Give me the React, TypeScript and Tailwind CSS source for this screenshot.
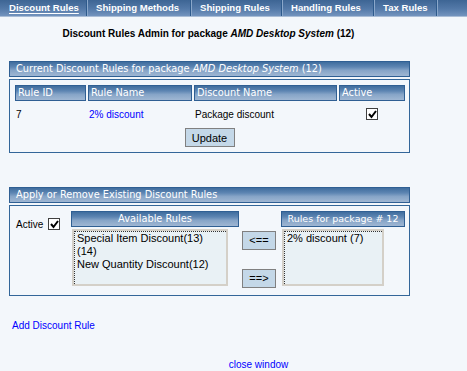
import React from "react";

const bar = "bg-[linear-gradient(to_bottom,#3f6d9e_0%,#5d85b2_35%,#86a4c7_60%,#9fb7d3_100%)]";

function Check() {
  return (
    <span className="inline-flex w-[12px] h-[12px] border border-[#404040] bg-white items-center justify-center">
      <svg width="9" height="9" viewBox="0 0 9 9">
        <path d="M1 4 L3.5 7 L8 1" stroke="#000" strokeWidth="2" fill="none" />
      </svg>
    </span>
  );
}

function Head({
  children,
  pad = "px-[6px]",
  size = "text-[9.8px]",
  className = "",
}: {
  children: React.ReactNode;
  pad?: string;
  size?: string;
  className?: string;
}) {
  return (
    <div
      className={`${bar} ${pad} ${size} border border-[#2f5f93] text-white font-['DejaVu_Sans',sans-serif] leading-[14px] whitespace-nowrap overflow-hidden ${className}`}
    >
      {children}
    </div>
  );
}

const tabs = [
  { label: "Discount Rules", w: "w-[87px]" },
  { label: "Shipping Methods", w: "w-[104px]" },
  { label: "Shipping Rules", w: "w-[91px]" },
  { label: "Handling Rules", w: "w-[92px]" },
  { label: "Tax Rules", w: "w-[63px]" },
];

export default function App() {
  return (
    <div className="w-[467px] h-[371px] bg-[#f3f7fb] font-['Liberation_Sans',Arial,sans-serif] text-[10px] overflow-hidden">
      <div className="flex h-[17px] bg-[linear-gradient(to_bottom,#3d6594,#5379a8_55%,#7394be)] border-b border-[#a9bdd6]">
        {tabs.map((t, i) => (
          <div
            key={t.label}
            className={`${t.w} pl-[9px] border-r border-[#2d5a8c] shadow-[1px_0_0_#8aa7ca] text-white font-bold text-[9.6px] leading-[16px] whitespace-nowrap`}
          >
            <span className={i === 0 ? "underline underline-offset-2" : ""}>{t.label}</span>
          </div>
        ))}
      </div>

      <div className="w-[417px] text-center font-bold text-[10px] leading-[12px] mt-[11px]">
        Discount Rules Admin for package <i>AMD Desktop System</i> (12)
      </div>

      <div className="mx-[9px] w-[401px] mt-[21px]">
        <Head>
          Current Discount Rules for package <i>AMD Desktop System</i> (12)
        </Head>
        <div className="mt-[2px] border border-[#336699] px-[5px] pt-[5px] pb-[5px]">
          <div className="grid grid-cols-[71px_104px_143px_66px] gap-x-[2px]">
            <Head pad="px-[2px]">Rule ID</Head>
            <Head pad="px-[2px]">Rule Name</Head>
            <Head pad="px-[2px]">Discount Name</Head>
            <Head pad="px-[2px]">Active</Head>
            <div className="mt-[2px] h-[22px] flex items-center pl-[1px]">7</div>
            <div className="mt-[2px] h-[22px] flex items-center pl-[1px] text-[#0000ff]">2% discount</div>
            <div className="mt-[2px] h-[22px] flex items-center pl-[1px]">Package discount</div>
            <div className="mt-[2px] h-[22px] flex items-center justify-center">
              <Check />
            </div>
          </div>
          <div className="flex justify-center mt-[3px]">
            <button className="w-[50px] bg-[#c4d8e8] border border-[#808080] text-[11px] h-[19px] leading-[16px]">
              Update
            </button>
          </div>
        </div>
      </div>

      <div className="mx-[9px] w-[401px] mt-[34px]">
        <Head>Apply or Remove Existing Discount Rules</Head>
        <div className="mt-[2px] border border-[#336699] pl-[6px] pt-[5px] pb-[7px] flex">
          <div className="w-[55px] shrink-0">
            <div className="flex items-center gap-[5px] h-[20px] mt-[3px]">
              <span>Active</span>
              <Check />
            </div>
          </div>
          <div className="w-[168px]">
            <Head className="text-center">Available Rules</Head>
            <div className="mt-[2px] ml-[1px] w-[156px] h-[57px] border-2 border-[#d4d0c8] bg-[#e9f1f5]">
              <div className="h-full border-t border-l border-dotted border-[#333] text-[11px] leading-[13px] px-[2px]">
                <div>Special Item Discount(13)</div>
                <div>(14)</div>
                <div>New Quantity Discount(12)</div>
              </div>
            </div>
          </div>
          <div className="ml-[3px] flex flex-col gap-[19px] pt-[20px]">
            <button className="w-[34px] h-[19px] bg-[#c4d8e8] border border-[#808080] text-[11px]">&lt;==</button>
            <button className="w-[34px] h-[19px] bg-[#c4d8e8] border border-[#808080] text-[11px]">==&gt;</button>
          </div>
          <div className="ml-[5px] w-[124px]">
            <Head pad="px-[2px]" size="text-[9.5px]" className="text-center">
              Rules for package # 12
            </Head>
            <div className="mt-[2px] ml-[1px] w-[102px] h-[57px] border-2 border-[#d4d0c8] bg-[#e9f1f5]">
              <div className="h-full border-t border-l border-dotted border-[#333] text-[11px] leading-[13px] px-[2px]">
                2% discount (7)
              </div>
            </div>
          </div>
        </div>
      </div>

      <div className="ml-[12px] mt-[24px] text-[#0000ff] leading-[12px]">Add Discount Rule</div>
      <div className="mt-[27px] pl-[50px] text-center text-[#0000ff] leading-[12px]">close window</div>
    </div>
  );
}
